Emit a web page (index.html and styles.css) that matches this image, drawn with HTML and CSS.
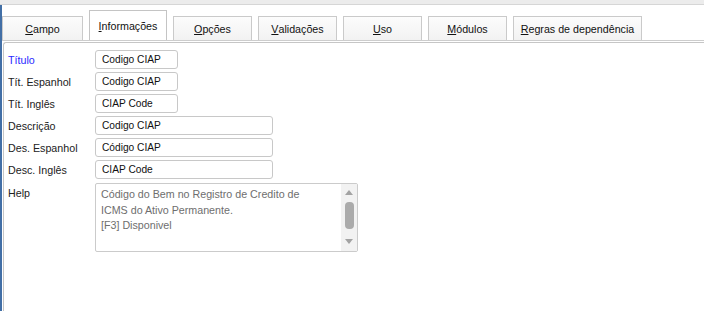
FILE: index.html
```html
<!DOCTYPE html>
<html>
    <head>
        <link rel="stylesheet" href="styles.css">
    </head>
    <body>
        <div class="topbar"></div>

        <div class="frame">
            <div class="tabs">
                <div class="tab tab-first"><u>C</u>ampo</div>
                <div class="tab tab-active"><u>I</u>nformações</div>
                <div class="tab"><u>O</u>pções</div>
                <div class="tab"><u>V</u>alidações</div>
                <div class="tab"><u>U</u>so</div>
                <div class="tab"><u>M</u>ódulos</div>
                <div class="tab tab-wide"><u>R</u>egras de dependência</div>
            </div>

            <div class="panel">
                <div class="form">
                    <label class="lbl lbl-key" for="titulo">Título</label>
                    <input class="fld fld-short" id="titulo" type="text" value="Codigo CIAP" readonly>

                    <label class="lbl" for="titEsp">Tít. Espanhol</label>
                    <input class="fld fld-short" id="titEsp" type="text" value="Codigo CIAP" readonly>

                    <label class="lbl" for="titIng">Tít. Inglês</label>
                    <input class="fld fld-short" id="titIng" type="text" value="CIAP Code" readonly>

                    <label class="lbl" for="descricao">Descrição</label>
                    <input class="fld fld-long" id="descricao" type="text" value="Codigo CIAP" readonly>

                    <label class="lbl" for="desEsp">Des. Espanhol</label>
                    <input class="fld fld-long" id="desEsp" type="text" value="Código CIAP" readonly>

                    <label class="lbl" for="descIng">Desc. Inglês</label>
                    <input class="fld fld-long" id="descIng" type="text" value="CIAP Code" readonly>

                    <label class="lbl lbl-help">Help</label>
                    <div class="help">
                        <div class="help-text">
                            Código do Bem no Registro de Credito de<br>
                            ICMS do Ativo Permanente.<br>
                            [F3] Disponivel
                        </div>
                        <div class="scroll">
                            <div class="arrow-up"></div>
                            <div class="thumb"></div>
                            <div class="arrow-down"></div>
                        </div>
                    </div>
                </div>
            </div>
        </div>
    </body>
</html>
```

FILE: styles.css
```css
html, body {
    height: 100%;
}

body {
    margin: 0;
    background-color: white;
    font-family: "Liberation Sans", Arial, sans-serif;
    font-size: 10.7px;
    color: #1e1e1e;
    display: flex;
    flex-direction: column;
    overflow: hidden;
}

.topbar {
    height: 4px;
    background-color: #ececec;
    border-bottom: 1px solid #d6d6d6;
}

.frame {
    flex: 1;
    display: flex;
    flex-direction: column;
    border-left: 2px solid #426fa6;
}

.tabs {
    height: 35px;
    display: flex;
    align-items: flex-end;
    gap: 6px;
    border-bottom: 1px solid #cdcdcd;
}

.tab {
    box-sizing: border-box;
    width: 79px;
    height: 24px;
    display: flex;
    align-items: center;
    justify-content: center;
    padding-top: 1px;
    border: 1px solid #cacaca;
    border-bottom: none;
    background: linear-gradient(#fcfcfc, #f2f2f2);
    color: #111;
}

.tab-first {
    width: 81px;
}

.tab-active {
    width: 78px;
    height: 30px;
    background: white;
    border-color: #c4c4c4;
}

.tab-wide {
    width: 129px;
}

.tab u {
    text-underline-offset: 1px;
}

.panel {
    flex: 1;
    margin: 1px 0 0 1px;
    border: 1px solid #c6c6c6;
    border-right: none;
    border-bottom: none;
    border-top-left-radius: 3px;
    padding: 7px 0 0 4px;
}

.form {
    display: grid;
    grid-template-columns: 87px auto;
    row-gap: 3px;
    justify-items: start;
}

.lbl {
    height: 19px;
    line-height: 21px;
    color: #222;
}

.lbl-key {
    color: #2a2aff;
}

.lbl-help {
    margin-top: 1px;
}

.fld {
    box-sizing: border-box;
    height: 19px;
    padding: 0 6px;
    border: 1px solid #c8c8c8;
    border-radius: 3px;
    font-family: "Liberation Sans", Arial, sans-serif;
    font-size: 10.2px;
    color: #111;
    background: white;
    outline: none;
}

.fld-short {
    width: 83px;
}

.fld-long {
    width: 178px;
}

.help {
    box-sizing: border-box;
    width: 263px;
    height: 69px;
    margin-top: 1px;
    display: flex;
    border: 1px solid #cbcbcb;
    border-radius: 2px;
}

.help-text {
    flex: 1;
    padding: 3px 0 0 5px;
    line-height: 15.5px;
    color: #6e6e6e;
}

.scroll {
    width: 16px;
    display: flex;
    flex-direction: column;
    align-items: center;
    background-color: #f2f2f2;
}

.arrow-up {
    margin-top: 6px;
    width: 0;
    height: 0;
    border-left: 4px solid transparent;
    border-right: 4px solid transparent;
    border-bottom: 5px solid #a3a3a3;
}

.thumb {
    margin-top: 7px;
    width: 9px;
    height: 27px;
    border-radius: 4px;
    background-color: #ababab;
}

.arrow-down {
    margin-top: auto;
    margin-bottom: 7px;
    width: 0;
    height: 0;
    border-left: 4px solid transparent;
    border-right: 4px solid transparent;
    border-top: 5px solid #a3a3a3;
}
```
